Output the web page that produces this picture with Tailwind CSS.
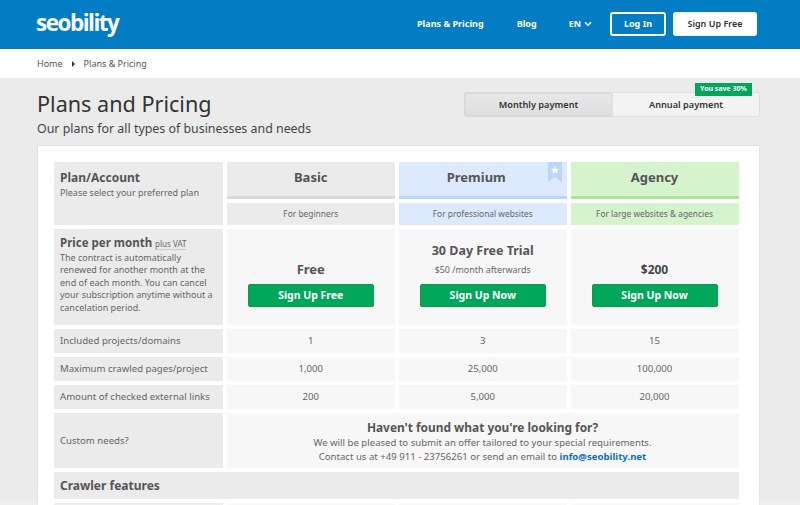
<!DOCTYPE html>
<html lang="en">
<head>
    <meta charset="UTF-8">
    <title>Plans and Pricing - Seobility</title>
    <script src="https://cdn.jsdelivr.net/npm/@tailwindcss/browser@4"></script>
</head>
<body class="relative h-[505px] overflow-hidden bg-[#ebebeb] font-['Noto_Sans',sans-serif] text-[#555]">
    <!-- top bar -->
    <header class="h-[49px] bg-[#027cc3] border-b border-[#1a6fae] flex items-center pl-[36px] pr-[43px] text-white">
        <span class="font-['Open_Sans',sans-serif] font-bold text-[22.5px] tracking-[-1.5px] leading-none -mt-[2px]">seobility</span>
        <nav class="ml-auto flex items-center text-[9px] font-bold">
            <a class="mr-[33px] -mt-[1px]">Plans &amp; Pricing</a>
            <a class="mr-[32px] -mt-[1px]">Blog</a>
            <a class="mr-[18px] -mt-[1px] flex items-center gap-[3px]">EN
                <svg width="8" height="6" viewBox="0 0 8 6" fill="none" stroke="white" stroke-width="1.6"><path d="M1 1.2l3 3 3-3"/></svg>
            </a>
            <a class="w-[56px] h-[24px] rounded-[3px] border-2 border-white flex items-center justify-center mr-[7px]">Log In</a>
            <a class="w-[84px] h-[24px] rounded-[3px] bg-white text-[#333] flex items-center justify-center font-semibold">Sign Up Free</a>
        </nav>
    </header>

    <!-- breadcrumb -->
    <div class="h-[29px] bg-white flex items-center pl-[37px] text-[9px] text-[#555]">
        <span>Home</span>
        <svg class="mx-[9px]" width="3" height="6" viewBox="0 0 3 6" fill="#333"><path d="M0 0l3 3-3 3z"/></svg>
        <span>Plans &amp; Pricing</span>
    </div>

    <main class="pl-[37px] pr-[40px]">
        <div class="flex justify-between h-[67px]">
            <div>
                <h1 class="text-[21.6px] leading-[32px] text-[#333] mt-[10px]">Plans and Pricing</h1>
                <p class="text-[12.4px] leading-[18px] text-[#444]">Our plans for all types of businesses and needs</p>
            </div>
            <div class="relative w-[296px] h-[25px] mt-[14px] flex text-[9.2px] font-semibold text-[#333]">
                <div class="w-[147px] rounded-l-[3px] border-2 border-r-0 border-[#d9d9d9] bg-gradient-to-b from-[#e8e8e8] to-[#dedede] flex items-center justify-center">Monthly payment</div>
                <div class="flex-1 rounded-r-[3px] border border-[#e0e0e0] border-l-2 bg-[#f3f3f3] flex items-center justify-center">Annual payment</div>
                <span class="absolute right-[8px] -top-[9px] w-[57px] h-[13px] bg-[#00a65a] text-white text-[7px] font-bold flex items-center justify-center">You save 30%</span>
            </div>
        </div>

        <!-- pricing card -->
        <section class="bg-white rounded-t-[2px] border border-[#e2e2e2] border-b-0 h-[400px] pl-[16px] pr-[19px] pt-[16px]">
            <div class="grid grid-cols-[169px_168.5px_168.5px_168px] gap-x-[3.5px] gap-y-[4px] text-[9.6px] text-[#666]">
                <div class="row-span-2 bg-[#ebebeb] px-[6px] pt-[8px]">
                    <div class="text-[12px] leading-[16px] font-bold text-[#555]">Plan/Account</div>
                    <div class="text-[9px] leading-[13px] text-[#666]">Please select your preferred plan</div>
                </div>
                <div class="h-[37px] bg-[#ebebeb] border-b-[3px] border-[#d9d9d9] flex items-center justify-center text-[13px] font-bold text-[#555] pb-[3px]">Basic</div>
                <div class="relative h-[37px] bg-[#dce9ff] border-b-[3px] border-[#bcd5fb] flex items-center justify-center text-[13px] font-bold text-[#555] pb-[3px] pr-[13px]">Premium
                    <svg class="absolute right-[5px] top-0" width="14" height="20" viewBox="0 0 14 20"><path d="M0 0h14v20l-7-5-7 5z" fill="#bcd5fb"/><path d="M7 4l1.2 2.7 2.9.3-2.2 1.9.7 2.9L7 10.3l-2.6 1.5.7-2.9L2.9 7l2.9-.3z" fill="#fff"/></svg>
                </div>
                <div class="h-[37px] bg-[#d5f3cd] border-b-[3px] border-[#a8e597] flex items-center justify-center text-[13px] font-bold text-[#555] pb-[3px]">Agency</div>
                <div class="h-[22px] bg-[#ebebeb] flex items-center justify-center text-[8.4px]">For beginners</div>
                <div class="h-[22px] bg-[#dce9ff] flex items-center justify-center text-[8.4px]">For professional websites</div>
                <div class="h-[22px] bg-[#d5f3cd] flex items-center justify-center text-[8.4px]">For large websites &amp; agencies</div>

                <div class="h-[96px] bg-[#ebebeb] px-[6px] pt-[6px] text-[9px] leading-[12.4px]">
                    <div class="text-[11.5px] leading-[16px] font-bold text-[#555]">Price per month <span class="text-[8px] font-normal text-[#666] border-b border-[#ccc]">plus VAT</span></div>
                    The contract is automatically renewed for another month at the end of each month. You can cancel your subscription anytime without a cancelation period.
                </div>
                <div class="bg-[#f7f7f7] flex flex-col items-center justify-end pb-[18px]">
                    <div class="text-[13px] leading-[18px] font-bold text-[#555] mb-[6px]">Free</div>
                    <a class="w-[126px] h-[23px] rounded-[2px] bg-[#00a65a] border border-[#11994f] text-white text-[10.5px] font-bold flex items-center justify-center">Sign Up Free</a>
                </div>
                <div class="bg-[#f7f7f7] flex flex-col items-center justify-end pb-[18px]">
                    <div class="text-[12.5px] leading-[18px] font-bold text-[#555] mb-[1px]">30 Day Free Trial</div>
                    <div class="text-[8.9px] leading-[18px] mb-[5px]">$50 /month afterwards</div>
                    <a class="w-[126px] h-[23px] rounded-[2px] bg-[#00a65a] border border-[#11994f] text-white text-[10.5px] font-bold flex items-center justify-center">Sign Up Now</a>
                </div>
                <div class="bg-[#f7f7f7] flex flex-col items-center justify-end pb-[18px]">
                    <div class="text-[12px] leading-[18px] font-bold text-[#444] mb-[5px]">$200</div>
                    <a class="w-[126px] h-[23px] rounded-[2px] bg-[#00a65a] border border-[#11994f] text-white text-[10.5px] font-bold flex items-center justify-center">Sign Up Now</a>
                </div>

                <div class="h-[24px] bg-[#ebebeb] px-[6px] pt-[1px] flex items-center">Included projects/domains</div>
                <div class="bg-[#f7f7f7] pt-[1px] flex items-center justify-center">1</div>
                <div class="bg-[#f7f7f7] pt-[1px] flex items-center justify-center">3</div>
                <div class="bg-[#f7f7f7] pt-[1px] flex items-center justify-center">15</div>

                <div class="h-[24px] bg-[#ebebeb] px-[6px] pt-[1px] flex items-center">Maximum crawled pages/project</div>
                <div class="bg-[#f7f7f7] pt-[1px] flex items-center justify-center">1,000</div>
                <div class="bg-[#f7f7f7] pt-[1px] flex items-center justify-center">25,000</div>
                <div class="bg-[#f7f7f7] pt-[1px] flex items-center justify-center">100,000</div>

                <div class="h-[24px] bg-[#ebebeb] px-[6px] pt-[1px] flex items-center">Amount of checked external links</div>
                <div class="bg-[#f7f7f7] pt-[1px] flex items-center justify-center">200</div>
                <div class="bg-[#f7f7f7] pt-[1px] flex items-center justify-center">5,000</div>
                <div class="bg-[#f7f7f7] pt-[1px] flex items-center justify-center">20,000</div>

                <div class="h-[55px] bg-[#ebebeb] px-[6px] pt-[2px] flex items-center">Custom needs?</div>
                <div class="col-span-3 bg-[#f7f7f7] text-center leading-[14px] pt-[5px]">
                    <div class="text-[11.9px] leading-[18px] font-bold text-[#555]">Haven't found what you're looking for?</div>
                    <div>We will be pleased to submit an offer tailored to your special requirements.</div>
                    <div>Contact us at +49 911 - 23756261 or send an email to <a class="font-bold text-[#0b6fc0]">info@seobility.net</a></div>
                </div>

                <div class="col-span-4 h-[27px] bg-[#ebebeb] px-[6px] flex items-center text-[12px] font-bold text-[#555]">Crawler features</div>

                <div class="h-[24px] bg-[#ebebeb]"></div>
                <div class="bg-[#f7f7f7]"></div>
                <div class="bg-[#f7f7f7]"></div>
                <div class="bg-[#f7f7f7]"></div>
            </div>
        </section>
    </main>

    <!-- soft fade at the bottom of the window -->
    <div class="absolute inset-x-0 bottom-0 h-[12px] bg-gradient-to-b from-transparent to-white/20 pointer-events-none"></div>
</body>
</html>
